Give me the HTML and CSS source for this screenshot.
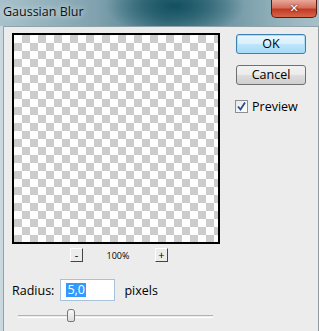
FILE: index.html
```html
<!DOCTYPE html>
<html>
    <head>
        <link rel="stylesheet" href="styles.css">
    </head>
    <body>
        <div class="window">
            <div class="titlebar">
                <div class="title">Gaussian Blur</div>
                <div class="close">&#x2715;</div>
            </div>
            <div class="client">
                <div class="left">
                    <div class="preview"></div>
                    <div class="zoom-row">
                        <div class="zbtn">-</div>
                        <div class="zoom-pct">100%</div>
                        <div class="zbtn">+</div>
                    </div>
                    <div class="radius-row">
                        <span class="lbl">Radius:</span>
                        <div class="input"><span class="sel">5,0</span></div>
                        <span class="lbl">pixels</span>
                    </div>
                    <div class="slider">
                        <div class="track"></div>
                        <div class="thumb"></div>
                    </div>
                </div>
                <div class="right">
                    <div class="btn btn-default">OK</div>
                    <div class="btn">Cancel</div>
                    <label class="check">
                        <span class="box">
                            <svg width="11" height="11" viewBox="0 0 11 11">
                                <path d="M2 5.5 L4.5 8.5 L9 1.5" fill="none" stroke="#2a4b8d" stroke-width="1.8"/>
                            </svg>
                        </span>
                        <span>Preview</span>
                    </label>
                </div>
            </div>
        </div>
    </body>
</html>
```

FILE: styles.css
```css
body {
    margin: 0;
    font-family: "Open Sans", "DejaVu Sans", sans-serif;
    font-size: 12px;
    color: #000;
}
.window {
    width: 319px;
    height: 331px;
    background: linear-gradient(to right, #c9d9df, #dde7ea 60%, #c7d6dc);
    display: flex;
    flex-direction: column;
    overflow: hidden;
}
.titlebar {
    height: 26px;
    display: flex;
    align-items: flex-start;
    background:
        radial-gradient(ellipse 70px 30px at 175px 6px, #12505f 0%, rgba(18,80,95,0.6) 45%, rgba(18,80,95,0) 100%),
        linear-gradient(to right, #a8c2cb 0%, #7fa2ae 30%, #4d7d8c 52%, #6d95a2 70%, #95b3bc 88%, #a6c0c8 100%);
    flex-shrink: 0;
}
.title {
    padding: 3px 0 0 3px;
    font-size: 12.5px;
    color: #111;
    text-shadow: 0 0 6px rgba(255,255,255,0.9);
}
.close {
    margin-left: auto;
    margin-right: 2px;
    width: 44px;
    height: 17px;
    border: 1px solid #5a1a10;
    border-top: none;
    border-radius: 0 0 5px 5px;
    background: linear-gradient(to bottom, #e9a899 0%, #d3705c 45%, #c23a22 55%, #d6664a 100%);
    color: #fff;
    font-size: 11px;
    font-weight: bold;
    text-align: center;
    line-height: 16px;
    text-shadow: 0 0 2px #400;
}
.client {
    flex: 1;
    margin-left: 3px;
    border-left: 1px solid #8fa3ab;
    border-top: 1px solid #8fa3ab;
    border-right: 1px solid #8f9a9e;
    background: #ececec;
    display: flex;
    padding: 6px 0 0 8px;
}
.left {
    width: 208px;
    display: flex;
    flex-direction: column;
}
.preview {
    width: 204px;
    height: 207px;
    border: 2px solid #000;
    background: repeating-conic-gradient(#ccc 0 25%, #fff 0 50%) 0 0 / 16px 16px;
}
.zoom-row {
    margin-top: 4px;
    display: flex;
    align-items: center;
    padding-left: 58px;
    height: 14px;
}
.zbtn {
    width: 11px;
    height: 12px;
    border-right: 1px solid #444;
    border-bottom: 1px solid #444;
    border-top: 1px solid #fff;
    border-left: 1px solid #fff;
    font-size: 11px;
    line-height: 11px;
    text-align: center;
}
.zoom-pct {
    font-size: 9px;
    width: 70px;
    text-align: center;
    padding-right: 2px;
}
.radius-row {
    margin-top: 17px;
    display: flex;
    align-items: center;
    height: 22px;
}
.lbl {
    font-size: 12.5px;
}
.input {
    margin-left: 6px;
    margin-right: 9px;
    width: 53px;
    height: 20px;
    border: 1px solid #a9c2dc;
    background: #fff;
    display: flex;
    align-items: center;
    padding-left: 5px;
    box-sizing: border-box;
    width: 55px;
    height: 22px;
}
.sel {
    background: #3399ff;
    color: #fff;
    font-size: 12.5px;
    line-height: 14px;
    padding: 0 1px;
}
.slider {
    margin-top: 9px;
    margin-left: 6px;
    width: 195px;
    height: 12px;
    position: relative;
}
.track {
    margin-top: 5px;
    height: 1px;
    border-top: 1px solid #b3b3b3;
    border-bottom: 1px solid #fff;
}
.thumb {
    position: absolute;
    left: 49px;
    top: -1px;
    width: 6px;
    height: 11px;
    border: 1px solid #777;
    border-radius: 3px 3px 2px 2px;
    background: linear-gradient(to bottom, #fafafa, #dcdcdc);
}
.right {
    margin-left: 16px;
    display: flex;
    flex-direction: column;
}
.btn {
    width: 70px;
    height: 20px;
    box-sizing: border-box;
    border: 1px solid #707070;
    border-radius: 3px;
    background: linear-gradient(to bottom, #f2f2f2 0%, #ebebeb 50%, #dddddd 51%, #cfcfcf 100%);
    text-align: center;
    line-height: 18px;
    font-size: 12.5px;
    margin-bottom: 11px;
}
.btn-default {
    margin-top: 1px;
    border-color: #3c7fb1;
    box-shadow: inset 0 0 0 1px #a6e0f7;
    background: linear-gradient(to bottom, #eaf6fd 0%, #d9f0fc 50%, #bee6fd 51%, #a7d9f5 100%);
}
.check {
    display: flex;
    align-items: center;
    margin-top: 2px;
    margin-left: -1px;
    font-size: 12.5px;
}
.box {
    width: 11px;
    height: 11px;
    border: 1px solid #8e8f8f;
    background: linear-gradient(to bottom right, #e8e8e8, #fff);
    margin-right: 4px;
    display: flex;
}
```
